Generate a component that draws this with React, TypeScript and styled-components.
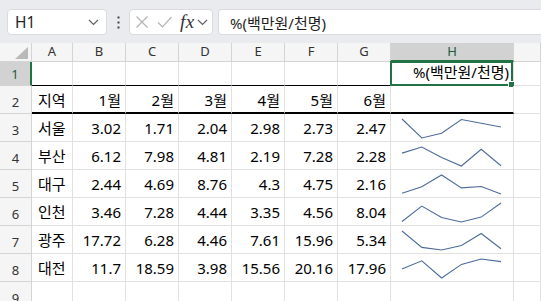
import React from 'react';
import styled, { createGlobalStyle } from 'styled-components';

const GlobalStyle = createGlobalStyle`
    html, body {
        margin: 0;
        padding: 0;
    }
    body {
        background: #e9ebee;
        font-family: "Noto Sans", "Noto Sans CJK KR", sans-serif;
        overflow: hidden;
    }
`;

const GREEN = '#217346';
const GRID = '#e1e1e1';
const HEAD_LINE = '#d4d4d4';

const Styled = {
    Shell: styled.div`
        width: 541px;
        height: 301px;
        overflow: hidden;
        display: flex;
        flex-direction: column;
    `,
    RibbonEdge: styled.div`
        height: 4px;
        margin-left: 7px;
        background: #fff;
        border-bottom-left-radius: 6px;
        box-shadow: 0 1px 2px rgba(0, 0, 0, 0.18);
    `,
    FormulaBar: styled.div`
        display: flex;
        align-items: center;
        padding: 9px 0 8px 7px;
    `,
    Box: styled.div`
        height: 26px;
        box-sizing: border-box;
        background: #fff;
        border: 1px solid #d9dbde;
        border-radius: 4px;
        display: flex;
        align-items: center;
    `,
    NameBox: styled.div`
        width: 100px;
        justify-content: space-between;
        padding: 0 7px 0 7px;
        font-size: 15.5px;
        color: #242424;
    `,
    Dots: styled.div`
        width: 22px;
        display: flex;
        justify-content: center;
    `,
    EditBox: styled.div`
        width: 84px;
        padding: 0 0 0 5px;
    `,
    Fx: styled.span`
        font-family: "Liberation Serif", serif;
        font-style: italic;
        font-size: 19px;
        line-height: 20px;
        color: #333;
        margin: 0 2px 0 7px;
        letter-spacing: 0.5px;
    `,
    FormulaInput: styled.div`
        flex: 1;
        margin-left: 5px;
        padding-left: 11px;
        border-right: none;
        border-top-right-radius: 0;
        border-bottom-right-radius: 0;
        font-size: 15px;
        color: #1f1f1f;
    `,
    Grid: styled.div`
        display: grid;
        grid-template-columns: 32px 41px repeat(6, 53px) 123px 1fr;
        grid-template-rows: 19px 24px repeat(8, 28px);
        background: #fff;
    `,
    Corner: styled.div`
        background: #f5f5f5;
        border-right: 1px solid ${HEAD_LINE};
        border-bottom: 1px solid ${HEAD_LINE};
        box-sizing: border-box;
        display: flex;
        align-items: flex-end;
        justify-content: flex-end;
        padding: 0 3px 2px 0;
    `,
    ColHead: styled.div<{ $selected?: boolean }>`
        box-sizing: border-box;
        background: ${(p) => (p.$selected ? '#d2d2d2' : '#f5f5f5')};
        border-right: 1px solid ${HEAD_LINE};
        border-bottom: ${(p) => (p.$selected ? `2px solid ${GREEN}` : `1px solid ${HEAD_LINE}`)};
        color: ${(p) => (p.$selected ? '#1d5b3b' : '#333')};
        font-size: 13px;
        display: flex;
        align-items: center;
        justify-content: center;
        padding-bottom: 2px;
    `,
    RowHead: styled.div<{ $selected?: boolean }>`
        box-sizing: border-box;
        background: ${(p) => (p.$selected ? '#d2d2d2' : '#f5f5f5')};
        border-right: ${(p) => (p.$selected ? `2px solid ${GREEN}` : `1px solid ${HEAD_LINE}`)};
        border-bottom: 1px solid ${HEAD_LINE};
        color: ${(p) => (p.$selected ? '#1d5b3b' : '#333')};
        font-size: 13px;
        display: flex;
        align-items: flex-end;
        justify-content: center;
        padding-bottom: 2px;
        line-height: 18px;
    `,
    Cell: styled.div<{ $align?: 'left' | 'right'; $rule?: 'thin' | 'thick' }>`
        position: relative;
        box-sizing: border-box;
        border-right: 1px solid ${GRID};
        border-bottom: ${(p) =>
            p.$rule === 'thick' ? '2px solid #000' : p.$rule === 'thin' ? '1px solid #000' : `1px solid ${GRID}`};
        display: flex;
        align-items: flex-end;
        justify-content: ${(p) => (p.$align === 'right' ? 'flex-end' : 'flex-start')};
        padding: 0 4px ${(p) => (p.$rule === 'thick' ? '2px' : '3px')} 6px;
        font-size: 15px;
        line-height: 20px;
        color: #000;
        white-space: nowrap;
    `,
    SparkCell: styled.div`
        box-sizing: border-box;
        border-right: 1px solid ${GRID};
        border-bottom: 1px solid ${GRID};
        & svg {
            display: block;
        }
    `,
    Selection: styled.div`
        position: absolute;
        left: -1px;
        top: -1px;
        right: 0;
        bottom: -1px;
        border: 2px solid ${GREEN};
        pointer-events: none;
        &::after {
            content: '';
            position: absolute;
            right: -4px;
            bottom: -4px;
            width: 5px;
            height: 5px;
            background: ${GREEN};
            border: 1px solid #fff;
        }
    `,
};

const columns = ['A', 'B', 'C', 'D', 'E', 'F', 'G', 'H'];
const months = ['1월', '2월', '3월', '4월', '5월', '6월'];

const rows: { region: string; values: string[] }[] = [
    { region: '서울', values: ['3.02', '1.71', '2.04', '2.98', '2.73', '2.47'] },
    { region: '부산', values: ['6.12', '7.98', '4.81', '2.19', '7.28', '2.28'] },
    { region: '대구', values: ['2.44', '4.69', '8.76', '4.3', '4.75', '2.16'] },
    { region: '인천', values: ['3.46', '7.28', '4.44', '3.35', '4.56', '8.04'] },
    { region: '광주', values: ['17.72', '6.28', '4.46', '7.61', '15.96', '5.34'] },
    { region: '대전', values: ['11.7', '18.59', '3.98', '15.56', '20.16', '17.96'] },
];

const Sparkline = ({ values }: { values: string[] }) => {
    const nums = values.map(Number);
    const max = Math.max(...nums);
    const min = Math.min(...nums);
    const pts = nums
        .map((v, i) => `${11 + i * 19.8},${5 + ((max - v) / (max - min)) * 19}`)
        .join(' ');
    return (
        <svg width="122" height="27" viewBox="0 0 122 27">
            <polyline points={pts} fill="none" stroke="#4d6c9a" strokeWidth="1.1" />
        </svg>
    );
};

const Chevron = () => (
    <svg width="11" height="7" viewBox="0 0 11 7">
        <path d="M1 1 L5.5 5.5 L10 1" fill="none" stroke="#616161" strokeWidth="1.2" />
    </svg>
);

const App = () => {
    return (
        <Styled.Shell>
            <GlobalStyle />
            <Styled.RibbonEdge />
            <Styled.FormulaBar>
                <Styled.Box as={Styled.NameBox}>
                    <span>H1</span>
                    <Chevron />
                </Styled.Box>
                <Styled.Dots>
                    <svg width="3" height="13" viewBox="0 0 3 13">
                        <rect x="0.5" y="0.5" width="2" height="2" fill="#444" />
                        <rect x="0.5" y="5.5" width="2" height="2" fill="#444" />
                        <rect x="0.5" y="10.5" width="2" height="2" fill="#444" />
                    </svg>
                </Styled.Dots>
                <Styled.Box as={Styled.EditBox}>
                    <svg width="14" height="14" viewBox="0 0 14 14">
                        <path d="M1.5 1.5 L12.5 12.5 M12.5 1.5 L1.5 12.5" stroke="#b4b4b4" strokeWidth="1.2" fill="none" />
                    </svg>
                    <svg width="16" height="14" viewBox="0 0 16 14" style={{ marginLeft: 8 }}>
                        <path d="M1 7.5 L5.5 12 L14.5 2" stroke="#b4b4b4" strokeWidth="1.2" fill="none" />
                    </svg>
                    <Styled.Fx>fx</Styled.Fx>
                    <Chevron />
                </Styled.Box>
                <Styled.Box as={Styled.FormulaInput}>%(백만원/천명)</Styled.Box>
            </Styled.FormulaBar>

            <Styled.Grid>
                <Styled.Corner>
                    <svg width="13" height="12" viewBox="0 0 13 12">
                        <polygon points="13,0 13,12 0,12" fill="#b9b9b9" />
                    </svg>
                </Styled.Corner>
                {columns.map((c) => (
                    <Styled.ColHead key={c} $selected={c === 'H'}>
                        {c}
                    </Styled.ColHead>
                ))}
                <Styled.ColHead />

                <Styled.RowHead $selected>1</Styled.RowHead>
                {columns.map((c) => (
                    <Styled.Cell key={c} $align="right" $rule="thin">
                        {c === 'H' && (
                            <>
                                %(백만원/천명)
                                <Styled.Selection />
                            </>
                        )}
                    </Styled.Cell>
                ))}
                <Styled.Cell />

                <Styled.RowHead>2</Styled.RowHead>
                <Styled.Cell $rule="thick">지역</Styled.Cell>
                {months.map((m) => (
                    <Styled.Cell key={m} $align="right" $rule="thick">
                        {m}
                    </Styled.Cell>
                ))}
                <Styled.Cell $rule="thick" />
                <Styled.Cell />

                {rows.map((r, i) => (
                    <React.Fragment key={r.region}>
                        <Styled.RowHead>{i + 3}</Styled.RowHead>
                        <Styled.Cell>{r.region}</Styled.Cell>
                        {r.values.map((v, j) => (
                            <Styled.Cell key={j} $align="right">
                                {v}
                            </Styled.Cell>
                        ))}
                        <Styled.SparkCell>
                            <Sparkline values={r.values} />
                        </Styled.SparkCell>
                        <Styled.Cell />
                    </React.Fragment>
                ))}

                <Styled.RowHead>9</Styled.RowHead>
                {columns.map((c) => (
                    <Styled.Cell key={c} />
                ))}
                <Styled.Cell />
            </Styled.Grid>
        </Styled.Shell>
    );
};

export default App;
